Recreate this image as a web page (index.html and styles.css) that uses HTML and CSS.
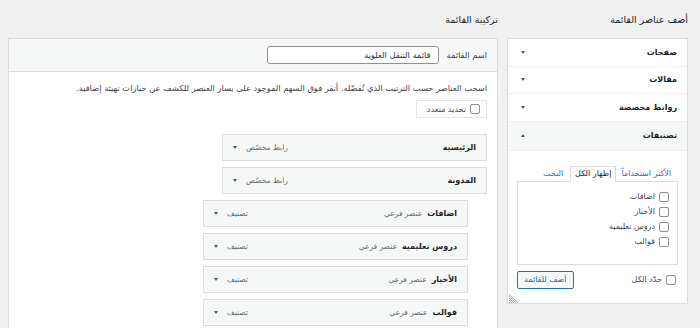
FILE: index.html
```html
<!DOCTYPE html>
<html lang="ar" dir="rtl">
<head>
<meta charset="utf-8">
<link rel="stylesheet" href="styles.css">
</head>
<body>
<div class="wrap">
  <div class="side">
    <h2 class="title">أضف عناصر القائمة</h2>
    <div class="acc">
      <div class="acc-row"><span>صفحات</span><span class="arr down"></span></div>
      <div class="acc-row"><span>مقالات</span><span class="arr down"></span></div>
      <div class="acc-row"><span>روابط مخصصة</span><span class="arr down"></span></div>
      <div class="acc-row open"><span>تصنيفات</span><span class="arr up"></span></div>
      <div class="acc-body">
        <div class="tabs">
          <span class="tab link">الأكثر استخداماً</span>
          <span class="tab active">إظهار الكل</span>
          <span class="tab link">البحث</span>
        </div>
        <div class="tabpanel">
          <label class="chk"><span class="box"></span><span>اضافات</span></label>
          <label class="chk"><span class="box"></span><span>الأخبار</span></label>
          <label class="chk"><span class="box"></span><span>دروس تعليمية</span></label>
          <label class="chk"><span class="box"></span><span>قوالب</span></label>
        </div>
        <div class="acc-foot">
          <label class="chk all"><span class="box"></span><span>حدّد الكل</span></label>
          <span class="btn">أضف للقائمة</span>
        </div>
        <svg class="grip" width="10" height="10" viewBox="0 0 10 10">
          <path d="M0 1 L9 10 M0 3 L7 10 M0 5 L5 10 M0 7 L3 10 M0 9 L1 10" stroke="#8c8f94" stroke-width="0.8"/>
        </svg>
      </div>
    </div>
  </div>
  <div class="main">
    <h2 class="title">تركيبة القائمة</h2>
    <div class="panel">
      <div class="panel-head">
        <span class="lbl">اسم القائمة</span>
        <span class="input">قائمة التنقل العلوية</span>
      </div>
      <div class="panel-body">
        <p class="hint">اسحب العناصر حسب الترتيب الذي تُفضّله. أنقر فوق السهم الموجود على يسار العنصر للكشف عن خيارات تهيئة إضافية.</p>
        <div class="bulk"><label class="chk"><span class="box"></span><span>تحديد متعدد</span></label></div>
        <ul class="items">
          <li class="item"><span class="it-title"><b>الرئيسية</b></span><span class="it-ctrl"><span class="type">رابط مخصّص</span><span class="arr down"></span></span></li>
          <li class="item"><span class="it-title"><b>المدونة</b></span><span class="it-ctrl"><span class="type">رابط مخصّص</span><span class="arr down"></span></span></li>
          <li class="item sub"><span class="it-title"><b>اضافات</b><span class="subl">عنصر فرعي</span></span><span class="it-ctrl"><span class="type">تصنيف</span><span class="arr down"></span></span></li>
          <li class="item sub"><span class="it-title"><b>دروس تعليمية</b><span class="subl">عنصر فرعي</span></span><span class="it-ctrl"><span class="type">تصنيف</span><span class="arr down"></span></span></li>
          <li class="item sub"><span class="it-title"><b>الأخبار</b><span class="subl">عنصر فرعي</span></span><span class="it-ctrl"><span class="type">تصنيف</span><span class="arr down"></span></span></li>
          <li class="item sub"><span class="it-title"><b>قوالب</b><span class="subl">عنصر فرعي</span></span><span class="it-ctrl"><span class="type">تصنيف</span><span class="arr down"></span></span></li>
        </ul>
      </div>
    </div>
  </div>
</div>
</body>
</html>
```
FILE: styles.css
```css
* { box-sizing: border-box; }
html, body { margin: 0; padding: 0; }
body {
  background: #f0f0f1;
  font-family: "DejaVu Sans", "Noto Sans", sans-serif;
  font-size: 8px;
  color: #3c434a;
  direction: rtl;
  overflow: hidden;
  height: 328px;
}
.wrap {
  display: flex;
  flex-direction: row;
  gap: 9px;
  padding: 0 12px 0 8px;
  align-items: flex-start;
}
.side { width: 181px; flex: none; }
.main { flex: 1; }
.title {
  margin: 0;
  height: 38px;
  line-height: 40px;
  font-size: 9.5px;
  font-weight: normal;
  color: #1d2327;
}
/* accordion */
.acc {
  background: #fff;
  border: 1px solid #dcdcde;
}
.acc-row {
  height: 27.5px;
  border-bottom: 1px solid #f0f0f1;
  display: flex;
  justify-content: space-between;
  align-items: center;
  padding: 0 10px 0 13px;
  font-size: 8px;
  color: #1d2327;
  font-weight: bold;
}
.acc-row.open {
  background: #f6f7f7;
  height: 29px;
}
.arr {
  width: 0; height: 0;
  border-left: 2.5px solid transparent;
  border-right: 2.5px solid transparent;
  display: inline-block;
  flex: none;
}
.arr.down { border-top: 3.5px solid #50575e; }
.arr.up { border-bottom: 3.5px solid #50575e; }
.acc-body {
  position: relative;
  padding: 15px 9px 14px 9px;
}
.tabs {
  display: flex;
  align-items: flex-end;
  height: 15px;
  padding-right: 4px;
}
.tab {
  font-size: 8px;
  padding: 0 3px;
  line-height: 14px;
  white-space: nowrap;
}
.tab.link { color: #2271b1; }
.tab.active {
  border: 1px solid #dcdcde;
  border-bottom: 1px solid #fff;
  background: #fff;
  color: #1d2327;
  margin-bottom: -1px;
  position: relative;
  z-index: 1;
  padding: 0 4px;
  height: 16px;
  margin-right: 2px;
  margin-left: 4px;
}
.tabpanel {
  border: 1px solid #dcdcde;
  height: 84px;
  padding: 10px 8px;
  display: flex;
  flex-direction: column;
  gap: 5px;
}
.chk {
  display: flex;
  align-items: center;
  gap: 4px;
  font-size: 8px;
  color: #3c434a;
  height: 10px;
  white-space: nowrap;
}
.box {
  width: 10px; height: 10px;
  border: 1px solid #8c8f94;
  border-radius: 2px;
  background: #fff;
  flex: none;
}
.acc-foot {
  display: flex;
  justify-content: space-between;
  align-items: center;
  margin-top: 6px;
  padding-right: 2px;
}
.btn {
  border: 1px solid #2271b1;
  color: #2271b1;
  background: #f6f7f7;
  border-radius: 2px;
  font-size: 8px;
  height: 18px;
  line-height: 16px;
  padding: 0 6px;
  text-align: center;
  white-space: nowrap;
}
.grip {
  position: absolute;
  left: 1px;
  bottom: 0px;
}
/* main panel */
.panel {
  background: #fff;
  border: 1px solid #dcdcde;
  height: 300px;
}
.panel-head {
  background: #f6f7f7;
  border-bottom: 1px solid #dcdcde;
  height: 33px;
  display: flex;
  align-items: center;
  padding: 0 10px 0 0;
  gap: 7px;
}
.lbl { font-size: 8.3px; color: #3c434a; }
.input {
  width: 172px;
  height: 18px;
  border: 1px solid #8c8f94;
  border-radius: 3px;
  background: #fff;
  font-size: 8.3px;
  color: #2c3338;
  line-height: 16px;
  padding: 0 8px;
  white-space: nowrap;
}
.panel-body { padding: 11px 10px 0 10px; }
.hint {
  margin: 0;
  font-size: 8.3px;
  line-height: 10px;
  color: #3c434a;
  white-space: nowrap;
}
.bulk {
  margin-top: 7px;
  width: 71px;
  height: 18px;
  border: 1px solid #e5e5e5;
  background: #fff;
  display: flex;
  align-items: center;
  padding-right: 6px;
}
.items {
  list-style: none;
  margin: 16px 0 0 0;
  padding: 0;
  display: flex;
  flex-direction: column;
  gap: 6px;
  align-items: flex-start;
}
.item {
  width: 265px;
  height: 27px;
  background: #f6f7f7;
  border: 1px solid #dcdcde;
  display: flex;
  justify-content: space-between;
  align-items: center;
  padding: 0 10px 0 10px;
}
.item.sub { margin-right: 19px; }
.it-title {
  display: flex;
  align-items: center;
  gap: 5px;
  white-space: nowrap;
}
.it-title b { font-size: 8px; color: #1d2327; display: inline-block; }
.subl { color: #646970; font-size: 7.5px; display: inline-block; }
.it-ctrl { display: flex; align-items: center; gap: 9px; }
.type { color: #646970; font-size: 7.5px; white-space: nowrap; }
```
